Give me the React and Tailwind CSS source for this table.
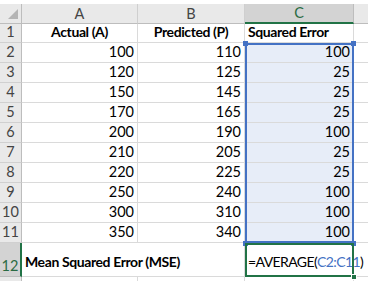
import React from "react";

const rows = [
  [100, 110, 100],
  [120, 125, 25],
  [150, 145, 25],
  [170, 165, 25],
  [200, 190, 100],
  [210, 205, 25],
  [220, 225, 25],
  [250, 240, 100],
  [300, 310, 100],
  [350, 340, 100],
];

const rowHead =
  "flex items-end justify-center bg-[#e9e9e9] border-r border-b border-r-[#bdbdbd] border-b-[#d0d0d0] text-[#444] leading-none pb-[3px]";
const cell = "flex items-end border-r border-b border-[#dadada] leading-none px-[3px] pb-[3px]";
const label = "font-bold text-[14px] tracking-[-0.4px]";

function Handle({ className }) {
  return <div className={`absolute w-[5px] h-[5px] bg-[#4472c4] ${className}`} />;
}

export default function App() {
  return (
    <div className="w-[368px] h-[281px] overflow-hidden bg-white pt-[4px] font-['Lato',sans-serif] text-[14.5px] text-black">
      <div className="relative grid grid-cols-[22px_116px_107px_109px_1fr] grid-rows-[20px_19px_repeat(10,20px)_34px_20px]">
        {/* column headers */}
        <div className="relative bg-[#e9e9e9] border-r border-b border-[#bdbdbd]">
          <svg className="absolute right-[3px] bottom-[4px]" width="10" height="10" viewBox="0 0 10 10">
            <polygon points="10,0 10,10 0,10" fill="#b4b4b4" />
          </svg>
        </div>
        <div className="flex items-center justify-center bg-[#e9e9e9] border-r border-b border-r-[#cfcfcf] border-b-[#bdbdbd] text-[#444]">A</div>
        <div className="flex items-center justify-center bg-[#e9e9e9] border-r border-b border-r-[#cfcfcf] border-b-[#bdbdbd] text-[#444]">B</div>
        <div className="flex items-center justify-center bg-[#d3d3d3] border-r border-r-[#bdbdbd] border-b-2 border-b-[#217346] text-[#2a6b43]">C</div>
        <div className="bg-[#e9e9e9] border-b border-[#bdbdbd]" />

        {/* row 1 */}
        <div className={rowHead}>1</div>
        <div className={`${cell} justify-center ${label}`}>Actual (A)</div>
        <div className={`${cell} justify-center ${label}`}>Predicted (P)</div>
        <div className={`${cell} ${label}`}>Squared Error</div>
        <div className="border-b border-[#dadada]" />

        {rows.map((r, i) => (
          <React.Fragment key={i}>
            <div className={rowHead}>{i + 2}</div>
            <div className={`${cell} justify-end`}>{r[0]}</div>
            <div className={`${cell} justify-end`}>{r[1]}</div>
            <div className={`${cell} justify-end bg-[#e7edf8]`}>{r[2]}</div>
            <div className="border-b border-[#dadada]" />
          </React.Fragment>
        ))}

        {/* row 12 */}
        <div className="flex items-end justify-center bg-[#d3d3d3] border-r-2 border-r-[#217346] border-b border-b-[#bdbdbd] text-[#2a6b43] leading-none pb-[3px]">12</div>
        <div className={`col-span-2 flex items-center border-r border-b border-[#dadada] px-[3px] pt-[3px] whitespace-nowrap ${label}`}>
          Mean Squared Error (MSE)
        </div>
        <div className="col-span-2 flex items-center border-b border-[#dadada] px-[3px] pt-[3px] whitespace-nowrap text-[14px] tracking-[-0.6px]">
          =AVERAGE(<span className="text-[#4472c4]">C2:C11</span>)
        </div>

        {/* row 13 */}
        <div className={rowHead} />
        <div className={cell} />
        <div className={cell} />
        <div className={cell} />
        <div className="border-b border-[#dadada]" />

        {/* formula range highlight C2:C11 */}
        <div className="absolute left-[245px] top-[39px] w-[109px] h-[200px] border-2 border-[#4472c4]" />
        <Handle className="left-[243px] top-[37px]" />
        <Handle className="left-[351px] top-[37px]" />
        <Handle className="left-[243px] top-[237px]" />
        <Handle className="left-[351px] top-[237px]" />

        {/* active cell C12 */}
        <div className="absolute left-[245px] top-[239px] w-[109px] h-[34px] border-2 border-[#217346]" />
        <div className="absolute left-[351px] top-[270px] w-[6px] h-[6px] bg-[#217346] border border-white" />
      </div>
    </div>
  );
}
